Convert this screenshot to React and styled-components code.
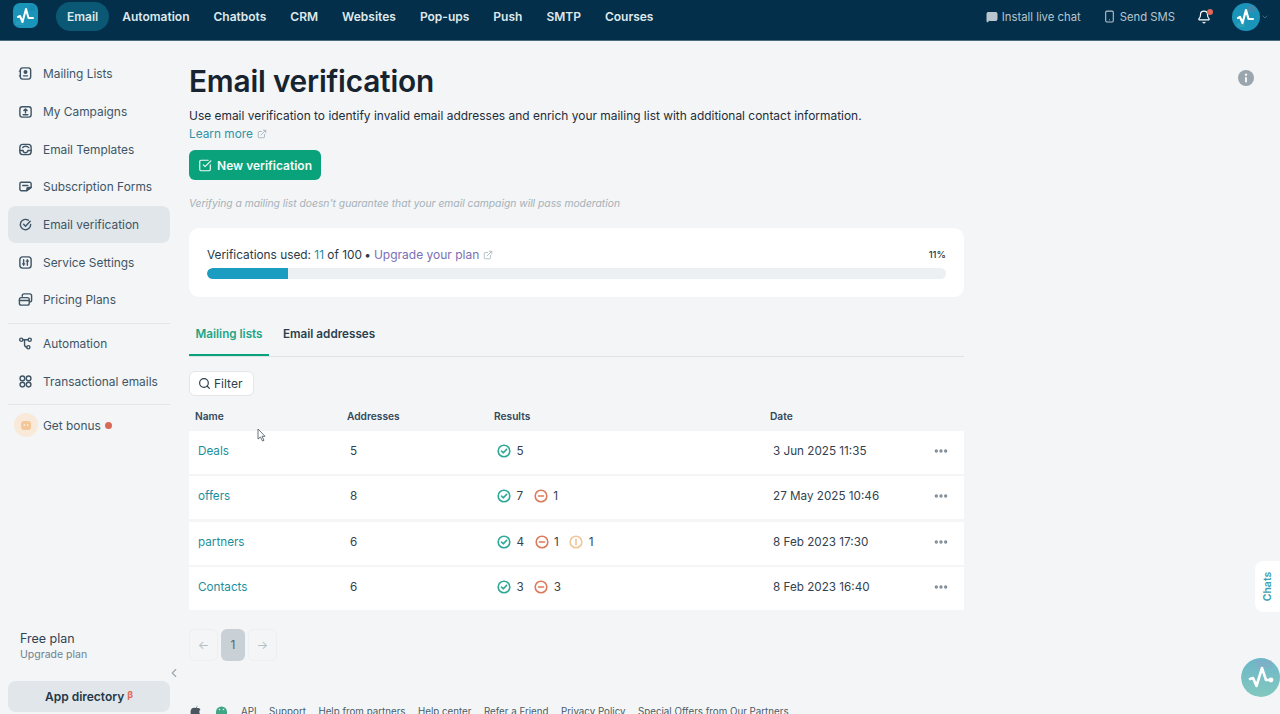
import React from 'react';
import styled, { createGlobalStyle } from 'styled-components';
import { Bell, Search, ExternalLink, Ellipsis, ChevronLeft, ChevronDown, MessageSquareMore, Smartphone, SquareCheckBig } from 'lucide-react';

const Global = createGlobalStyle`
  html, body { margin: 0; padding: 0; height: 714px; overflow: hidden; background: #f3f5f6; }
  body { font-family: Inter, "Noto Sans", "Liberation Sans", sans-serif; color: #1f2d3a; }
  * { box-sizing: border-box; }
`;

const Page = styled.div`display:flex;flex-direction:column;width:1280px;height:714px;position:relative;overflow:hidden;`;
const Header = styled.header`height:41px;flex:none;background:#032f4a;border-bottom:1px solid #4a6b80;display:flex;align-items:flex-start;padding:2px 11px 0 13px;`;
const LogoWrap = styled.div`width:25px;height:28px;margin-right:18px;flex:none;`;
const TopNav = styled.nav`display:flex;align-items:center;height:29px;`;
const TopItem = styled.a`
  font-size:12px;font-weight:600;color:#dfe8ec;height:29px;display:flex;align-items:center;
  padding:0 11px;margin-right:2px;border-radius:15px;white-space:nowrap;
  background:${p=>p.$active?'#0b5874':'transparent'};
`;
const TopRight = styled.div`margin-left:auto;display:flex;align-items:center;height:29px;color:#b9c6ce;font-size:11.3px;`;
const TopLink = styled.a`display:flex;align-items:center;gap:4px;margin-right:${p=>p.$mr}px;white-space:nowrap;`;
const BellWrap = styled.span`position:relative;display:flex;color:#fff;margin-right:21px;`;
const RedDot = styled.span`position:absolute;right:-2px;top:-1px;width:6px;height:6px;border-radius:50%;background:#e2685a;`;
const Avatar = styled.span`width:28px;height:28px;display:block;margin-right:1px;`;
const Caret = styled.span`display:flex;color:#6d8595;`;

const Body = styled.div`flex:1;display:flex;min-height:0;`;
const Sidebar = styled.aside`width:178px;flex:none;padding:14px 8px 2px;display:flex;flex-direction:column;position:relative;`;
const SideItem = styled.a`
  height:37.7px;flex:none;display:flex;align-items:center;gap:10px;padding:0 10px;border-radius:8px;
  color:#3f5566;font-size:11.9px;white-space:nowrap;font-weight:400;
  background:${p=>p.$active?'#e0e6ea':'transparent'};
  svg{flex:none;}
`;
const Divider = styled.hr`border:0;border-top:1px solid #e2e6e9;margin:4px 0 1px;width:100%;height:0;flex:none;`;
const BonusIcon = styled.span`width:24px;height:24px;border-radius:50%;background:#f9e9d8;display:flex;align-items:center;justify-content:center;margin-left:-4px;margin-right:-5px;flex:none;`;
const Dot = styled.span`width:7px;height:7px;border-radius:50%;background:#da6a58;margin-left:-6px;`;
const PlanBox = styled.div`margin-top:auto;padding:0 12px 19px;`;
const PlanName = styled.div`font-size:12.5px;color:#2f4354;line-height:16px;`;
const PlanLink = styled.div`font-size:10.5px;color:#6f8290;line-height:15px;`;
const AppDir = styled.a`height:31px;flex:none;background:#e0e6ea;border-radius:8px;font-size:12px;font-weight:600;color:#243848;display:flex;align-items:center;justify-content:center;`;
const Beta = styled.sup`color:#e2685a;font-size:9.5px;font-weight:700;margin-left:3px;line-height:0;position:relative;top:-2px;`;
const Collapse = styled.span`position:absolute;right:-3px;bottom:34px;color:#9aa8b2;display:flex;`;

const Main = styled.main`flex:1;padding:22px 0 0 11px;position:relative;min-width:0;`;
const Column = styled.div`width:775px;`;
const Title = styled.h1`margin:0;font-size:29.8px;line-height:36px;font-weight:600;color:#17242f;letter-spacing:-.2px;white-space:nowrap;`;
const Lead = styled.p`margin:7.5px 0 0;font-size:11.95px;line-height:18px;color:#1f2d3a;white-space:nowrap;`;
const LearnMore = styled.a`display:flex;align-items:center;gap:4px;font-size:11.85px;line-height:18px;color:#2f93a6;svg{color:#9fb0ba;}`;
const PrimaryBtn = styled.button`display:flex;align-items:center;gap:5px;margin-top:7.5px;height:30px;width:132px;padding:0 9px;border:0;border-radius:6px;background:#0aa27a;color:#f3fbf8;font:600 12px Inter,sans-serif;white-space:nowrap;`;
const Note = styled.p`margin:16px 0 0;font-size:10.3px;line-height:14px;font-style:italic;color:#a6b1b8;white-space:nowrap;`;
const Card = styled.section`margin-top:18px;height:69px;background:#fff;border-radius:10px;padding:18px 18px 0;`;
const UsageRow = styled.div`display:flex;justify-content:space-between;align-items:center;font-size:11.85px;line-height:18px;color:#2a3a47;`;
const UsageText = styled.div`display:flex;align-items:center;white-space:pre;`;
const Num = styled.span`color:#1c8ca5;`;
const Sep = styled.span`margin:0 3px 0 -1px;`;
const Upgrade = styled.a`color:#7a70b5;font-size:12px;`;
const UsageIcon = styled.span`display:flex;margin-left:4px;color:#a9b6be;`;
const Pct = styled.span`font-size:9.5px;font-weight:500;`;
const Bar = styled.div`height:11px;background:#edf0f2;border-radius:6px;margin-top:4px;overflow:hidden;`;
const BarFill = styled.div`height:100%;background:#1a9dc0;border-radius:6px 0 0 6px;`;
const Tabs = styled.div`display:flex;margin-top:22px;height:38px;border-bottom:1px solid #dfe3e6;`;
const Tab = styled.a`
  height:37px;margin-right:14px;display:flex;align-items:center;justify-content:center;padding-bottom:5px;
  font-size:11.7px;font-weight:600;white-space:nowrap;
  color:${p=>p.$active?'#1fa585':'#2c3f4e'};
  border-bottom:2px solid ${p=>p.$active?'#0aa27a':'transparent'};
  min-width:${p=>p.$active?'80px':'0'};
`;
const FilterBtn = styled.button`display:flex;align-items:center;gap:3px;margin-top:14px;height:25px;width:65px;padding:0 8px;background:#fff;border:1px solid #e3e7ea;border-radius:6px;font:400 12px Inter,sans-serif;color:#2c3f4e;`;
const TableHead = styled.div`display:grid;grid-template-columns:152px 147px 276px 1fr;padding:0 6px;margin-top:5px;height:30px;align-items:center;font-size:10.2px;font-weight:600;color:#33485a;`;
const Rows = styled.div`display:flex;flex-direction:column;gap:2.3px;`;
const Row = styled.div`display:grid;grid-template-columns:152px 147px 276px 1fr;height:43px;align-items:center;padding:0 15px 3px 9px;background:#fff;font-size:11.7px;color:#33424e;`;
const NameLink = styled.a`color:#1c8f9e;`;
const Addr = styled.span``;
const Results = styled.div`display:flex;align-items:center;`;
const Result = styled.span`display:flex;align-items:center;gap:5.5px;margin-right:10.5px;`;
const DateCell = styled.div`display:flex;justify-content:space-between;align-items:center;white-space:nowrap;`;
const DateBody = styled.span``;
const Dots = styled.span`display:flex;color:#7d8a94;`;
const Pager = styled.div`display:flex;gap:3px;margin-top:19px;`;
const PageBtn = styled.span`
  height:32px;width:${p=>p.$w}px;border-radius:6px;display:flex;align-items:center;justify-content:center;font-size:12px;
  color:${p=>p.$active?'#55666f':'#b4bec5'};
  background:${p=>p.$active?'#c9d1d6':'transparent'};
  border:${p=>p.$active?'0':'1px solid #edf0f2'};
`;
const Footer = styled.footer`display:flex;align-items:center;margin-top:42px;height:18px;font-size:9.75px;color:#4b5b66;white-space:nowrap;`;
const FooterIcons = styled.span`display:flex;align-items:center;gap:14px;margin-right:13px;padding-left:1px;`;
const FooterLink = styled.a`margin-right:12.5px;`;
const InfoBtn = styled.span`position:absolute;left:1060px;top:29px;display:block;width:16px;height:16px;`;
const ChatsTab = styled.div`position:absolute;right:0;top:561px;width:25px;height:51px;background:#fff;border-radius:8px 0 0 8px;display:flex;align-items:center;justify-content:center;`;
const ChatsText = styled.span`transform:rotate(-90deg);font-size:10.5px;font-weight:600;color:#3fa1ad;`;
const Fab = styled.div`position:absolute;left:1241px;top:658px;width:39px;height:39px;border-radius:50% 0 0 50%;overflow:hidden;`;
const Cursor = styled.svg`position:absolute;left:257px;top:428px;`;

const DotField = ({x, y, cols, rows, step, fill, r}) => {
  const dots = [];
  for (let i = 0; i < cols; i++) for (let j = 0; j < rows; j++) {
    dots.push(<circle key={i + '-' + j} cx={x + i * step} cy={y + j * step} r={r} fill={fill} />);
  }
  return <g>{dots}</g>;
};

const Logo = () => (
  <svg width="25" height="28" viewBox="0 0 25 28">
    <rect x="0" y="1" width="25" height="25" rx="7" fill="#1a94b8"/>
    <DotField x={17} y={4} cols={3} rows={3} step={2} fill="#0d6f96" r={0.5}/>
    <DotField x={4} y={20} cols={4} rows={2} step={2} fill="#5dc0c8" r={0.5}/>
    <path d="M5 15l2-1 2.500 6 3.500-13 2.500 9H20" fill="none" stroke="#fff" strokeWidth="2" strokeLinecap="round" strokeLinejoin="round"/>
  </svg>
);
const Round = () => (
  <svg width="28" height="28" viewBox="0 0 28 28">
    <circle cx="14" cy="14" r="14" fill="#1a94b8"/>
    <DotField x={16} y={4} cols={4} rows={3} step={2} fill="#d4607a" r={0.5}/>
    <DotField x={6} y={21} cols={4} rows={2} step={2} fill="#6fd0a8" r={0.5}/>
    <path d="M6 15l2-1 2.500 6 3.500-13 2.500 9H21" fill="none" stroke="#fff" strokeWidth="2.200" strokeLinecap="round" strokeLinejoin="round"/>
  </svg>
);

const I = ({children}) => <svg width="15" height="15" viewBox="0 0 16 16" fill="none" stroke="#3f5566" strokeWidth="1.5" strokeLinecap="round" strokeLinejoin="round">{children}</svg>;
const icons = {
  lists: <I><rect x="2.500" y="2" width="11" height="12" rx="2.500"/><circle cx="8" cy="6.500" r="1.400" fill="#3f5566"/><path d="M5.800 10.500h4.400"/><path d="M1.500 5.500h1M1.500 10.500h1"/></I>,
  camp: <I><rect x="2" y="3" width="12" height="11" rx="2.500"/><path d="M8 9.500V5.500M6.300 7 8 5.300 9.700 7M5.500 11.500h5"/></I>,
  tmpl: <I><rect x="2" y="2.500" width="12" height="11" rx="3"/><path d="M2 9h3.500a2.500 2.500 0 0 0 5 0H14"/><path d="M5 6c1-2 5-2 6.500 0"/></I>,
  form: <I><path d="M14 9V5a1.500 1.500 0 0 0-1.500-1.500h-9A1.500 1.500 0 0 0 2 5v6a1.500 1.500 0 0 0 1.500 1.500H9z"/><path d="M5 7h5.500M9.500 12.500 14 9h-3a1.500 1.500 0 0 0-1.500 1.500z" fill="#3f5566"/></I>,
  verify: <I><path d="M13.500 8A5.500 5.500 0 1 1 11 3.400"/><path d="M6 7.800 8 9.800 13 4.500"/></I>,
  settings: <I><rect x="2" y="2" width="12" height="12" rx="3"/><path d="M6 5v6M10 5v6M4.800 9.500H7.200M8.800 6.500h2.400"/></I>,
  pricing: <I><rect x="1.500" y="6" width="10.500" height="8" rx="2"/><path d="M1.500 9h10.500"/><path d="M4.500 4.500V4A2 2 0 0 1 6.500 2h6A2 2 0 0 1 14.500 4v4.500a2 2 0 0 1-2 2"/></I>,
  grid: <I><circle cx="4.700" cy="4.700" r="2.500"/><circle cx="11.300" cy="4.700" r="2.500"/><circle cx="4.700" cy="11.300" r="2.500"/><circle cx="11.300" cy="11.300" r="2.500"/></I>,
  auto: <I><circle cx="3.500" cy="4" r="1.700"/><circle cx="12.500" cy="4" r="1.700"/><circle cx="11" cy="12" r="1.700"/><path d="M5.200 4h5.600M7 4v5a3 3 0 0 0 2.300 3"/></I>,
};

const Status = ({kind}) => {
  const c = {ok:'#2ea897',bad:'#da7b5c',warn:'#f0c596'}[kind];
  return (
    <svg width="14" height="14" viewBox="0 0 14 14" fill="none" stroke={c} strokeWidth="1.600" strokeLinecap="round" strokeLinejoin="round">
      <circle cx="7" cy="7" r="5.800"/>
      {kind==='ok' && <path d="M4.500 7 6.400 8.800 9.600 5.400"/>}
      {kind==='bad' && <path d="M4.400 7h5.200"/>}
      {kind==='warn' && <path d="M7 4.200v5.600"/>}
    </svg>
  );
};

const side1 = [['lists','Mailing Lists'],['camp','My Campaigns'],['tmpl','Email Templates'],['form','Subscription Forms'],['verify','Email verification',true],['settings','Service Settings'],['pricing','Pricing Plans']];
const rows = [
  {n:'Deals',a:5,r:[['ok',5]],d:'3 Jun 2025 11:35'},
  {n:'offers',a:8,r:[['ok',7],['bad',1]],d:'27 May 2025 10:46'},
  {n:'partners',a:6,r:[['ok',4],['bad',1],['warn',1]],d:'8 Feb 2023 17:30'},
  {n:'Contacts',a:6,r:[['ok',3],['bad',3]],d:'8 Feb 2023 16:40'},
];
const topNav = [['Email',true],['Automation'],['Chatbots'],['CRM'],['Websites'],['Pop-ups'],['Push'],['SMTP'],['Courses']];
const footer = ['API','Support','Help from partners','Help center','Refer a Friend','Privacy Policy','Special Offers from Our Partners'];

export default function App() {
  return (
    <Page>
      <Global/>
      <Header>
        <LogoWrap><Logo/></LogoWrap>
        <TopNav>
          {topNav.map(([t,a]) => <TopItem key={t} $active={a}>{t}</TopItem>)}
        </TopNav>
        <TopRight>
          <TopLink $mr={22}><MessageSquareMore size={12} fill="#b9c6ce" stroke="#b9c6ce"/>Install live chat</TopLink>
          <TopLink $mr={22}><Smartphone size={13}/>Send SMS</TopLink>
          <BellWrap><Bell size={14}/><RedDot/></BellWrap>
          <Avatar><Round/></Avatar>
          <Caret><ChevronDown size={8}/></Caret>
        </TopRight>
      </Header>
      <Body>
        <Sidebar>
          {side1.map(([i,t,a]) => <SideItem key={t} $active={a}>{icons[i]}{t}</SideItem>)}
          <Divider/>
          <SideItem>{icons.auto}Automation</SideItem>
          <SideItem>{icons.grid}Transactional emails</SideItem>
          <Divider/>
          <SideItem>
            <BonusIcon><svg width="12" height="12" viewBox="0 0 12 12"><rect x="1" y="2" width="10" height="9" rx="3" fill="#f3c79a"/><circle cx="4.300" cy="6" r=".8" fill="#fff"/><circle cx="7.700" cy="6" r=".8" fill="#fff"/></svg></BonusIcon>
            Get bonus<Dot/>
          </SideItem>
          <PlanBox>
            <PlanName>Free plan</PlanName>
            <PlanLink>Upgrade plan</PlanLink>
          </PlanBox>
          <AppDir>App directory<Beta>β</Beta></AppDir>
          <Collapse><ChevronLeft size={14}/></Collapse>
        </Sidebar>
        <Main>
          <Column>
            <Title>Email verification</Title>
            <Lead>Use email verification to identify invalid email addresses and enrich your mailing list with additional contact information.</Lead>
            <LearnMore>Learn more<ExternalLink size={10}/></LearnMore>
            <PrimaryBtn><SquareCheckBig size={15}/>New verification</PrimaryBtn>
            <Note>Verifying a mailing list doesn't guarantee that your email campaign will pass moderation</Note>
            <Card>
              <UsageRow>
                <UsageText>Verifications used: <Num>11</Num> of 100 <Sep>•</Sep><Upgrade>Upgrade your plan</Upgrade><UsageIcon><ExternalLink size={10}/></UsageIcon></UsageText>
                <Pct>11%</Pct>
              </UsageRow>
              <Bar><BarFill style={{width:'11%'}}/></Bar>
            </Card>
            <Tabs>
              <Tab $active>Mailing lists</Tab>
              <Tab>Email addresses</Tab>
            </Tabs>
            <FilterBtn><Search size={13} strokeWidth={2.2}/>Filter</FilterBtn>
            <TableHead><span>Name</span><span>Addresses</span><span>Results</span><span>Date</span></TableHead>
            <Rows>
              {rows.map(r => (
                <Row key={r.n}>
                  <NameLink>{r.n}</NameLink>
                  <Addr>{r.a}</Addr>
                  <Results>{r.r.map(([k,v],i) => <Result key={i}><Status kind={k}/>{v}</Result>)}</Results>
                  <DateCell><DateBody>{r.d}</DateBody><Dots><Ellipsis size={16} strokeWidth={3}/></Dots></DateCell>
                </Row>
              ))}
            </Rows>
            <Pager>
              <PageBtn $w={29}>←</PageBtn>
              <PageBtn $w={24} $active>1</PageBtn>
              <PageBtn $w={29}>→</PageBtn>
            </Pager>
            <Footer>
              <FooterIcons>
                <svg width="11" height="13" viewBox="0 0 11 13"><path d="M7.500 0 6 3C3 2 .5 3.500.5 7c0 3 2 6 3.500 6 .8 0 1-.4 1.700-.4s.9.400 1.700.400c1.200 0 2.600-2 3-3.500C9 8.800 9 5 10.500 4.500 9.500 3 7.500 2.700 6.800 3.200z" fill="#4a5560"/></svg>
                <svg width="13" height="14" viewBox="0 0 13 14"><path d="M1 7a5.500 5.500 0 0 1 11 0v7H1z" fill="#3ea585"/><circle cx="4.500" cy="4.500" r=".8" fill="#e8f3ef"/><circle cx="8.500" cy="4.500" r=".8" fill="#e8f3ef"/></svg>
              </FooterIcons>
              {footer.map(f => <FooterLink key={f}>{f}</FooterLink>)}
            </Footer>
          </Column>
          <InfoBtn>
            <svg width="16" height="16" viewBox="0 0 16 16"><circle cx="8" cy="8" r="8" fill="#9aa5ad"/><rect x="7" y="7" width="2" height="5.500" rx=".8" fill="#f3f5f6"/><circle cx="8" cy="4.700" r="1.200" fill="#f3f5f6"/></svg>
          </InfoBtn>
        </Main>
      </Body>
      <ChatsTab><ChatsText>Chats</ChatsText></ChatsTab>
      <Fab>
        <svg width="39" height="39" viewBox="0 0 39 39">
          <defs><linearGradient id="fabGrad" x1="0" y1="0" x2="0" y2="1"><stop offset="0" stopColor="#6db6c9"/><stop offset="1" stopColor="#82c8bf"/></linearGradient></defs>
          <circle cx="19.500" cy="19.500" r="19.500" fill="url(#fabGrad)"/>
          <DotField x={16} y={3} cols={8} rows={4} step={2} fill="#b58fc4" r={0.5}/>
          <path d="M9 21l3-1 3.500 8L21 10l4 12h5" fill="none" stroke="#fff" strokeWidth="2.600" strokeLinecap="round" strokeLinejoin="round"/>
          <circle cx="30" cy="22" r="2.400" fill="#fff"/>
        </svg>
      </Fab>
      <Cursor width="10" height="14" viewBox="0 0 10 14"><path d="M1 1v10l2.500-2 2 4 1.500-.7-2-4H8z" fill="#fff" stroke="#45525c" strokeWidth=".8"/></Cursor>
    </Page>
  );
}
